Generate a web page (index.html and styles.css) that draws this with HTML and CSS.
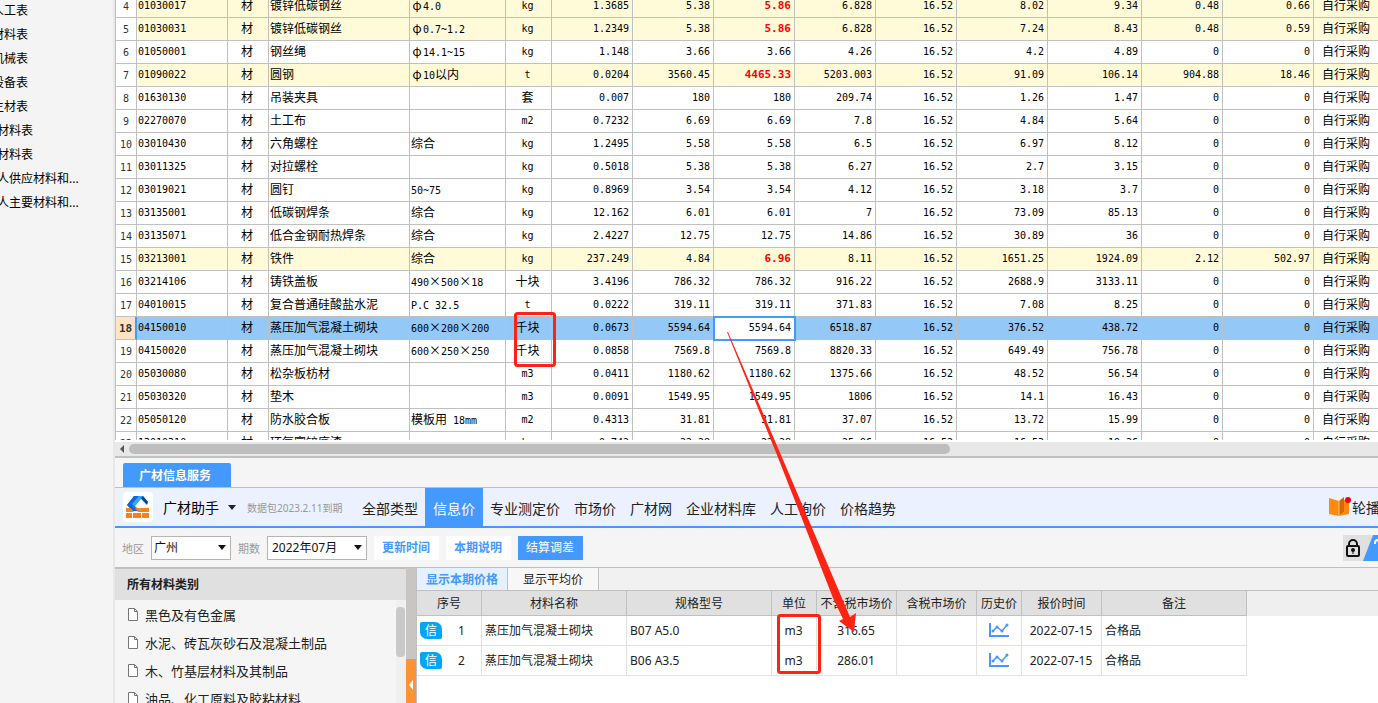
FILE: index.html
```html
<!DOCTYPE html>
<html lang="zh-CN">
<head>
<meta charset="utf-8">
<title>广材信息服务</title>
<link rel="stylesheet" href="styles.css">
</head>
<body>
<div class="app">
  <nav class="sidebar">
    <ul class="side-list">
      <li>人工表</li>
      <li>材料表</li>
      <li>机械表</li>
      <li>设备表</li>
      <li>主材表</li>
      <li class="deep">材料表</li>
      <li class="deep">材料表</li>
      <li class="deep">人供应材料和...</li>
      <li class="deep">人主要材料和...</li>
    </ul>
  </nav>

  <main class="main">
    <section class="sheet">
      <table class="grid">
        <colgroup>
          <col class="w-no"><col class="w-code"><col class="w-kind"><col class="w-name"><col class="w-spec"><col class="w-unit">
          <col class="w-81"><col class="w-81"><col class="w-81"><col class="w-81"><col class="w-81"><col class="w-91"><col class="w-94"><col class="w-81"><col class="w-91"><col>
        </colgroup>
        <tbody>
          <tr class="changed"><th>4</th><td class="code">01030017</td><td class="mid">材</td><td class="txt">镀锌低碳钢丝</td><td class="txt"><span class="phi">φ</span><span class="n">4.0</span></td><td class="unit">kg</td><td>1.3685</td><td>5.38</td><td class="hot">5.86</td><td>6.828</td><td>16.52</td><td>8.02</td><td>9.34</td><td>0.48</td><td>0.66</td><td class="way">自行采购</td></tr>
          <tr class="changed"><th>5</th><td class="code">01030031</td><td class="mid">材</td><td class="txt">镀锌低碳钢丝</td><td class="txt"><span class="phi">φ</span><span class="n">0.7~1.2</span></td><td class="unit">kg</td><td>1.2349</td><td>5.38</td><td class="hot">5.86</td><td>6.828</td><td>16.52</td><td>7.24</td><td>8.43</td><td>0.48</td><td>0.59</td><td class="way">自行采购</td></tr>
          <tr><th>6</th><td class="code">01050001</td><td class="mid">材</td><td class="txt">钢丝绳</td><td class="txt"><span class="phi">φ</span><span class="n">14.1~15</span></td><td class="unit">kg</td><td>1.148</td><td>3.66</td><td>3.66</td><td>4.26</td><td>16.52</td><td>4.2</td><td>4.89</td><td>0</td><td>0</td><td class="way">自行采购</td></tr>
          <tr class="changed"><th>7</th><td class="code">01090022</td><td class="mid">材</td><td class="txt">圆钢</td><td class="txt"><span class="phi">φ</span><span class="n">10</span>以内</td><td class="unit">t</td><td>0.0204</td><td>3560.45</td><td class="hot">4465.33</td><td>5203.003</td><td>16.52</td><td>91.09</td><td>106.14</td><td>904.88</td><td>18.46</td><td class="way">自行采购</td></tr>
          <tr><th>8</th><td class="code">01630130</td><td class="mid">材</td><td class="txt">吊装夹具</td><td></td><td class="mid">套</td><td>0.007</td><td>180</td><td>180</td><td>209.74</td><td>16.52</td><td>1.26</td><td>1.47</td><td>0</td><td>0</td><td class="way">自行采购</td></tr>
          <tr><th>9</th><td class="code">02270070</td><td class="mid">材</td><td class="txt">土工布</td><td></td><td class="unit">m2</td><td>0.7232</td><td>6.69</td><td>6.69</td><td>7.8</td><td>16.52</td><td>4.84</td><td>5.64</td><td>0</td><td>0</td><td class="way">自行采购</td></tr>
          <tr><th>10</th><td class="code">03010430</td><td class="mid">材</td><td class="txt">六角螺栓</td><td class="txt">综合</td><td class="unit">kg</td><td>1.2495</td><td>5.58</td><td>5.58</td><td>6.5</td><td>16.52</td><td>6.97</td><td>8.12</td><td>0</td><td>0</td><td class="way">自行采购</td></tr>
          <tr><th>11</th><td class="code">03011325</td><td class="mid">材</td><td class="txt">对拉螺栓</td><td></td><td class="unit">kg</td><td>0.5018</td><td>5.38</td><td>5.38</td><td>6.27</td><td>16.52</td><td>2.7</td><td>3.15</td><td>0</td><td>0</td><td class="way">自行采购</td></tr>
          <tr><th>12</th><td class="code">03019021</td><td class="mid">材</td><td class="txt">圆钉</td><td class="txt"><span class="n">50~75</span></td><td class="unit">kg</td><td>0.8969</td><td>3.54</td><td>3.54</td><td>4.12</td><td>16.52</td><td>3.18</td><td>3.7</td><td>0</td><td>0</td><td class="way">自行采购</td></tr>
          <tr><th>13</th><td class="code">03135001</td><td class="mid">材</td><td class="txt">低碳钢焊条</td><td class="txt">综合</td><td class="unit">kg</td><td>12.162</td><td>6.01</td><td>6.01</td><td>7</td><td>16.52</td><td>73.09</td><td>85.13</td><td>0</td><td>0</td><td class="way">自行采购</td></tr>
          <tr><th>14</th><td class="code">03135071</td><td class="mid">材</td><td class="txt">低合金钢耐热焊条</td><td class="txt">综合</td><td class="unit">kg</td><td>2.4227</td><td>12.75</td><td>12.75</td><td>14.86</td><td>16.52</td><td>30.89</td><td>36</td><td>0</td><td>0</td><td class="way">自行采购</td></tr>
          <tr class="changed"><th>15</th><td class="code">03213001</td><td class="mid">材</td><td class="txt">铁件</td><td class="txt">综合</td><td class="unit">kg</td><td>237.249</td><td>4.84</td><td class="hot">6.96</td><td>8.11</td><td>16.52</td><td>1651.25</td><td>1924.09</td><td>2.12</td><td>502.97</td><td class="way">自行采购</td></tr>
          <tr><th>16</th><td class="code">03214106</td><td class="mid">材</td><td class="txt">铸铁盖板</td><td class="txt"><span class="n">490</span>×<span class="n">500</span>×<span class="n">18</span></td><td class="mid">十块</td><td>3.4196</td><td>786.32</td><td>786.32</td><td>916.22</td><td>16.52</td><td>2688.9</td><td>3133.11</td><td>0</td><td>0</td><td class="way">自行采购</td></tr>
          <tr><th>17</th><td class="code">04010015</td><td class="mid">材</td><td class="txt">复合普通硅酸盐水泥</td><td class="txt"><span class="n">P.C 32.5</span></td><td class="unit">t</td><td>0.0222</td><td>319.11</td><td>319.11</td><td>371.83</td><td>16.52</td><td>7.08</td><td>8.25</td><td>0</td><td>0</td><td class="way">自行采购</td></tr>
          <tr class="selected"><th>18</th><td class="code">04150010</td><td class="mid">材</td><td class="txt">蒸压加气混凝土砌块</td><td class="txt"><span class="n">600</span>×<span class="n">200</span>×<span class="n">200</span></td><td class="mid">千块</td><td>0.0673</td><td>5594.64</td><td class="editing">5594.64</td><td>6518.87</td><td>16.52</td><td>376.52</td><td>438.72</td><td>0</td><td>0</td><td class="way">自行采购</td></tr>
          <tr><th>19</th><td class="code">04150020</td><td class="mid">材</td><td class="txt">蒸压加气混凝土砌块</td><td class="txt"><span class="n">600</span>×<span class="n">250</span>×<span class="n">250</span></td><td class="mid">千块</td><td>0.0858</td><td>7569.8</td><td>7569.8</td><td>8820.33</td><td>16.52</td><td>649.49</td><td>756.78</td><td>0</td><td>0</td><td class="way">自行采购</td></tr>
          <tr><th>20</th><td class="code">05030080</td><td class="mid">材</td><td class="txt">松杂板枋材</td><td></td><td class="unit">m3</td><td>0.0411</td><td>1180.62</td><td>1180.62</td><td>1375.66</td><td>16.52</td><td>48.52</td><td>56.54</td><td>0</td><td>0</td><td class="way">自行采购</td></tr>
          <tr><th>21</th><td class="code">05030320</td><td class="mid">材</td><td class="txt">垫木</td><td></td><td class="unit">m3</td><td>0.0091</td><td>1549.95</td><td>1549.95</td><td>1806</td><td>16.52</td><td>14.1</td><td>16.43</td><td>0</td><td>0</td><td class="way">自行采购</td></tr>
          <tr><th>22</th><td class="code">05050120</td><td class="mid">材</td><td class="txt">防水胶合板</td><td class="txt">模板用<span class="n"> 18mm</span></td><td class="unit">m2</td><td>0.4313</td><td>31.81</td><td>31.81</td><td>37.07</td><td>16.52</td><td>13.72</td><td>15.99</td><td>0</td><td>0</td><td class="way">自行采购</td></tr>
          <tr><th>23</th><td class="code">13010310</td><td class="mid">材</td><td class="txt">环氧富锌底漆</td><td></td><td class="unit">kg</td><td>0.742</td><td>22.28</td><td>22.28</td><td>25.96</td><td>16.52</td><td>16.53</td><td>19.26</td><td>0</td><td>0</td><td class="way">自行采购</td></tr>
        </tbody>
      </table>
    </section>
    <div class="hscroll"><span class="hscroll-arrow"></span><span class="hscroll-thumb"></span></div>

    <section class="panel">
      <div class="panel-tabs"><button class="panel-tab">广材信息服务</button></div>

      <header class="topnav">
        <span class="logo">
          <svg width="24" height="24" viewBox="0 0 24 24">
            <path d="M8 1H17L9 11L14 16H7L1 10Z" fill="#1d8cf0"/>
            <path d="M8 1H13L6 10L11 16H7L1 10Z" fill="#1368d8"/>
            <path d="M13 1H17L22 7L20 9L15 4L9 11L6 9Z" fill="#35a9f5"/>
            <path d="M15 3L17 1L22 7L21 10Z" fill="#0b3f96"/>
            <path d="M0 13H4L8 17H0ZM15 13H23V17H11ZM0 18H6V23H0ZM7 18H15V23H7ZM16 18H23V23H16Z" fill="#fb8115"/>
            <path d="M9 13L12 16L15 13Z" fill="#fb8115"/>
          </svg>
        </span>
        <button class="brand">广材助手<span class="caret"></span></button>
        <span class="expire">数据包2023.2.11到期</span>
        <nav class="menu">
          <a href="#">全部类型</a><a href="#" class="on">信息价</a><a href="#">专业测定价</a><a href="#">市场价</a><a href="#">广材网</a><a href="#">企业材料库</a><a href="#">人工询价</a><a href="#">价格趋势</a>
        </nav>
        <a href="#" class="carousel">
          <svg width="23" height="20" viewBox="0 0 23 20">
            <path d="M0 1L10 4V19L0 17Z" fill="#ff8a0c"/>
            <path d="M10 4L15 0V15L10 19Z" fill="#cf6a05"/>
            <path d="M15 3L20 2V17L10 19L15 15Z" fill="#ff8a0c"/>
            <path d="M10 4V19" stroke="#ffc27d"/>
            <circle cx="19" cy="3" r="3" fill="#f50010"/>
          </svg>
          <span>轮播</span>
        </a>
      </header>

      <div class="toolbar">
        <label for="area">地区</label>
        <span class="pick area"><select id="area"><option>广州</option></select></span>
        <label for="period">期数</label>
        <span class="pick period"><select id="period"><option>2022年07月</option></select></span>
        <button class="tool">更新时间</button>
        <button class="tool">本期说明</button>
        <button class="tool primary">结算调差</button>
        <span class="corner">
          <svg width="35" height="26" viewBox="0 0 35 26">
            <path d="M30 0H35V26H20Z" fill="#4499ff"/>
            <path d="M32 9V8Q32 5 35 5" fill="none" stroke="#fff" stroke-width="2"/>
            <rect x="4" y="11" width="12" height="10" rx="1" fill="none" stroke="#111" stroke-width="2"/>
            <path d="M6 11V9A4 4 0 0 1 14 9V11" fill="none" stroke="#111" stroke-width="2"/>
            <circle cx="10" cy="15" r="2" fill="#111"/><path d="M10 15V19" stroke="#111" stroke-width="1"/>
          </svg>
        </span>
      </div>

      <div class="work">
        <aside class="cats">
          <h2>所有材料类别</h2>
          <div class="cats-body">
            <ul>
              <li><svg width="10" height="13" viewBox="0 0 10 13"><path d="M.5 .5H6.500L9.500 3.500V12.500H.5ZM6.500 .5V3.500H9.500" fill="#fff" stroke="#777"/></svg><a href="#">黑色及有色金属</a></li>
              <li><svg width="10" height="13" viewBox="0 0 10 13"><path d="M.5 .5H6.500L9.500 3.500V12.500H.5ZM6.500 .5V3.500H9.500" fill="#fff" stroke="#777"/></svg><a href="#">水泥、砖瓦灰砂石及混凝土制品</a></li>
              <li><svg width="10" height="13" viewBox="0 0 10 13"><path d="M.5 .5H6.500L9.500 3.500V12.500H.5ZM6.500 .5V3.500H9.500" fill="#fff" stroke="#777"/></svg><a href="#">木、竹基层材料及其制品</a></li>
              <li><svg width="10" height="13" viewBox="0 0 10 13"><path d="M.5 .5H6.500L9.500 3.500V12.500H.5ZM6.500 .5V3.500H9.500" fill="#fff" stroke="#777"/></svg><a href="#">油品、化工原料及胶粘材料</a></li>
            </ul>
            <div class="vscroll"><span></span></div>
          </div>
        </aside>
        <div class="splitter"><button aria-label="收起"><span></span></button></div>
        <div class="prices">
          <div class="subtabs"><button class="on">显示本期价格</button><button>显示平均价</button></div>
          <table class="ptable">
            <colgroup><col class="p-no"><col class="p-wide"><col class="p-wide"><col class="p-45"><col class="p-80"><col class="p-80"><col class="p-45"><col class="p-80"><col class="p-wide"><col></colgroup>
            <thead><tr><th>序号</th><th>材料名称</th><th>规格型号</th><th>单位</th><th>不含税市场价</th><th>含税市场价</th><th>历史价</th><th>报价时间</th><th>备注</th><th class="rest"></th></tr></thead>
            <tbody>
              <tr><td><div class="idx"><span class="badge">信</span>1</div></td><td class="l">蒸压加气混凝土砌块</td><td class="l">B07 A5.0</td><td>m3</td><td>316.65</td><td></td><td><svg class="chart" width="20" height="14" viewBox="0 0 20 14"><path d="M1 0V13H20" fill="none" stroke="#4499ff" stroke-width="2"/><path d="M4 8L8 4L13 8L18 2" fill="none" stroke="#4499ff" stroke-width="1.500"/><g fill="#4499ff"><circle cx="4" cy="8" r="1.500"/><circle cx="8" cy="4" r="1.500"/><circle cx="13" cy="8" r="1.500"/><circle cx="18" cy="2" r="1.500"/></g></svg></td><td>2022-07-15</td><td class="l">合格品</td><td class="rest"></td></tr>
              <tr><td><div class="idx"><span class="badge">信</span>2</div></td><td class="l">蒸压加气混凝土砌块</td><td class="l">B06 A3.5</td><td>m3</td><td>286.01</td><td></td><td><svg class="chart" width="20" height="14" viewBox="0 0 20 14"><path d="M1 0V13H20" fill="none" stroke="#4499ff" stroke-width="2"/><path d="M4 8L8 4L13 8L18 2" fill="none" stroke="#4499ff" stroke-width="1.500"/><g fill="#4499ff"><circle cx="4" cy="8" r="1.500"/><circle cx="8" cy="4" r="1.500"/><circle cx="13" cy="8" r="1.500"/><circle cx="18" cy="2" r="1.500"/></g></svg></td><td>2022-07-15</td><td class="l">合格品</td><td class="rest"></td></tr>
            </tbody>
          </table>
        </div>
      </div>
    </section>
  </main>

  <svg class="marks" width="860" height="680" viewBox="0 0 860 680">
    <g fill="none" stroke="#ff2314" stroke-width="3">
      <rect x="515.500" y="313.500" width="39" height="52" rx="2"/>
      <rect x="778.500" y="615.500" width="41" height="57" rx="2"/>
    </g>
    <path d="M727 332L728 332L781 455L850 617L856 613L854 632L839 621L843 619L833 598L777 455Z" fill="#ff2314"/>
  </svg>
</div>
</body>
</html>
```

FILE: styles.css
```css
* { box-sizing: border-box; }
body { margin: 0; font-family: "Noto Sans", "Noto Sans CJK SC", sans-serif; font-size: 12px; color: #222; background: #fff; }
button { border: 0; padding: 0; margin: 0; background: none; font: inherit; color: inherit; }
a { color: inherit; text-decoration: none; }
ul { list-style: none; margin: 0; padding: 0; }
svg { display: block; flex: none; }

.app { position: relative; display: flex; height: 100vh; overflow: hidden; }

.sidebar { flex: none; width: 115px; overflow: hidden; background: #f4f4f4; border-right: 2px solid #e8e8e8; color: #000; }
.side-list { margin-top: -1px; }
.side-list li { line-height: 24px; margin-left: -8px; white-space: nowrap; }
.side-list .deep { margin-left: -3px; }

.main { flex: 1; min-width: 0; display: flex; flex-direction: column; }

/* quantity sheet */
.sheet { flex: 1; min-height: 0; overflow: hidden; margin-bottom: 2px; border-left: 1px solid #c0c0c0; }
.grid { width: 100%; margin-top: -5px; table-layout: fixed; border-collapse: separate; border-spacing: 0; font-family: "DejaVu Sans Mono", "Noto Sans CJK SC", monospace; font-size: 10px; color: #000; }
.w-no { width: 21px; }
.w-code, .w-91 { width: 91px; }
.w-kind { width: 41px; }
.w-name { width: 141px; }
.w-spec { width: 96px; }
.w-unit { width: 46px; }
.w-81 { width: 81px; }
.w-94 { width: 94px; }
.grid td, .grid th { height: 23px; padding: 0 3px 0 1px; line-height: 22px; vertical-align: top; overflow: hidden; white-space: nowrap; text-align: right; border-right: 1px solid #c0c0c0; border-bottom: 1px solid #c0c0c0; }
.grid th { padding: 2px 0 0; line-height: 20px; text-align: center; font-weight: 400; color: #333; }
.grid .code { text-align: left; }
.grid .txt, .grid .mid, .grid .way { font-family: "Noto Sans CJK SC", sans-serif; font-size: 12px; line-height: 20px; text-align: left; }
.grid .mid, .grid .unit { text-align: center; }
.grid .way { padding-left: 8px; border-right: 0; }
.grid .n { font-family: "DejaVu Sans Mono", monospace; font-size: 10px; white-space: pre; }
.grid .phi { display: inline-block; width: 12px; text-align: center; }
.grid .hot { font-size: 11px; font-weight: 700; color: #f00; }
.grid .changed td { background: #fffbd9; }
.grid .selected td { background: #94c8f6; }
.grid .selected th { background: #ffe3c4; font-size: 11px; font-weight: 700; border-right: 2px solid #4499ff; }
.grid .selected .editing { position: relative; background: #fff; outline: 2px solid #4499ff; outline-offset: -1px; overflow: visible; }

.hscroll { flex: none; display: flex; align-items: center; height: 16px; background: #e8e8e8; border-bottom: 2px solid #c0c0c0; }
.hscroll-arrow { width: 0; margin: 0 5px; border: 4px solid transparent; border-left: 0; border-right-color: #555; }
.hscroll-thumb { width: 65%; height: 10px; border-radius: 5px; background: #bebebe; }

/* price panel */
.panel { flex: none; height: 245px; display: flex; flex-direction: column; background: #f5f5f5; }
.panel-tabs { flex: none; padding: 5px 8px 0; border-bottom: 1px solid #c0c0c0; }
.panel-tab { display: block; width: 108px; height: 24px; padding: 1px 16px 0; line-height: 23px; border-radius: 2px 2px 0 0; text-align: left; white-space: nowrap; background: #4499ff; color: #fff; font-weight: 700; }

.topnav { flex: none; display: flex; align-items: center; height: 40px; padding-left: 8px; background: #ebf1ff; border-bottom: 2px solid #4499ff; overflow: hidden; }
.logo { flex: none; padding: 3px; border-radius: 4px; background: #fff; }
.brand { display: flex; align-items: center; margin-left: 10px; font-size: 14px; color: #000; white-space: nowrap; }
.caret { margin-left: 9px; border: 4px solid transparent; border-top: 5px solid #222; border-bottom: 0; }
.expire { margin: 0 5px 0 11px; width: 103px; font-size: 10px; color: #999; white-space: nowrap; }
.menu { display: flex; align-self: stretch; font-size: 14px; line-height: 42px; white-space: nowrap; }
.menu a { padding: 0 7px; }
.menu .on { padding: 0 8px; background: #4499ff; color: #fff; }
.carousel { flex: none; display: flex; align-items: center; width: 49px; margin-left: auto; overflow: hidden; font-size: 14px; white-space: nowrap; }

.toolbar { flex: none; display: flex; align-items: center; gap: 7px; height: 39px; padding-left: 7px; }
.toolbar label { font-size: 11px; color: #999; }
.pick { position: relative; display: block; }
.pick select { display: block; width: 100%; height: 24px; padding: 0 4px 1px; border: 1px solid #b5b5b5; border-radius: 0; background: #fff; appearance: none; font: inherit; color: #111; }
.pick::after { content: ""; position: absolute; right: 5px; top: 9px; border: 4px solid transparent; border-top: 5px solid #111; border-bottom: 0; pointer-events: none; }
.area { width: 80px; }
.area select { padding-left: 2px; }
.period { width: 100px; }
.tool { width: 65px; height: 24px; padding: 0 1px 2px 0; background: #fff; color: #4499ff; font-weight: 700; }
.primary { background: #4499ff; color: #fff; font-weight: 400; }
.corner { margin-left: auto; background: #e0e0e0; }

.work { flex: 1; min-height: 0; display: flex; border-top: 1px solid #c0c0c0; }
.cats { flex: none; width: 291px; display: flex; flex-direction: column; border-top: 1px solid #c0c0c0; }
.cats h2 { flex: none; margin: 0; padding-left: 12px; font-size: 12px; line-height: 31px; background: #e0e0e0; color: #222; }
.cats-body { flex: 1; min-height: 0; display: flex; overflow: hidden; }
.cats ul { flex: 1; }
.cats li { display: flex; align-items: center; gap: 7px; height: 28px; padding-left: 13px; font-size: 13px; white-space: nowrap; }
.vscroll { width: 10px; padding: 7px 1px 0 0; background: #f0f0f0; }
.vscroll span { display: block; height: 50px; border-radius: 4px; background: #c9c9c9; }
.splitter { flex: none; width: 11px; display: flex; align-items: flex-end; background: #c9c5c3; border-right: 1px solid #c0c0c0; }
.splitter button { width: 10px; height: 44px; padding: 7px 3px 0; background: #ff9233; }
.splitter button span { display: block; border: 5px solid transparent; border-left: 0; border-right: 4px solid #fff; }

.prices { flex: 1; min-width: 0; background: #fff; }
.subtabs { display: flex; height: 23px; background: #f1f1f1; border-bottom: 1px solid #c0c0c0; }
.subtabs button { width: 91px; border-right: 1px solid #c0c0c0; background: #f7f7f7; }
.subtabs .on { background: #e6f1ff; color: #4499ff; font-weight: 700; }
.ptable { width: 100%; table-layout: fixed; border-collapse: separate; border-spacing: 0; }
.p-no { width: 65px; }
.p-wide { width: 145px; }
.p-45 { width: 45px; }
.p-80 { width: 80px; }
.ptable th { height: 25px; padding: 0; font-weight: 400; white-space: nowrap; background: #e0e0e0; border-right: 1px solid #c0c0c0; border-bottom: 1px solid #c0c0c0; }
.ptable td { height: 30px; padding: 0 1px 1px 0; text-align: center; white-space: nowrap; border-right: 1px solid #e2e2e2; border-bottom: 1px solid #e2e2e2; }
.ptable .l { padding-left: 3px; text-align: left; }
.ptable th.rest { background: #efefef; border-color: #efefef; }
.ptable td.rest { border: 0; }
.idx { display: flex; align-items: center; gap: 16px; padding-left: 3px; }
.badge { width: 22px; height: 17px; line-height: 17px; border-radius: 2px 7px 2px 7px; background: #02a7f0; color: #fff; }
.chart { margin: 0 auto; }

/* callouts drawn over the page */
.marks { position: absolute; left: 0; top: 0; pointer-events: none; }
```
